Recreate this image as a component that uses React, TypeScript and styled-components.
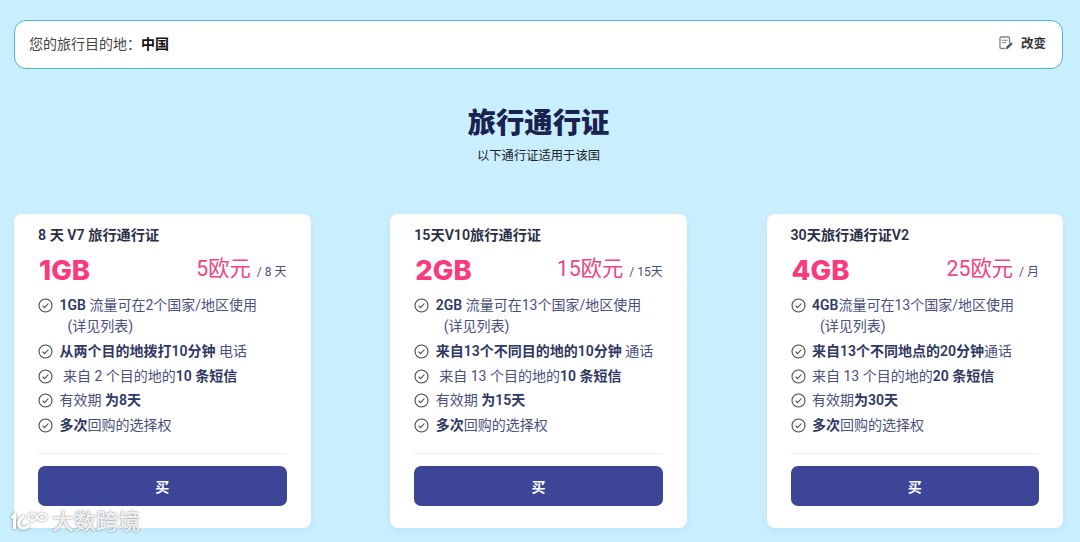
import { ReactNode } from "react";
import styled, { createGlobalStyle } from "styled-components";

interface IPass {
  title: string;
  data: string;
  price: string;
  period: string;
  features: ReactNode[];
}

const Note = styled.span`
  display: block;
  padding-left: 8px;
`;

const passes: IPass[] = [
  {
    title: "8 天 V7 旅行通行证",
    data: "1GB",
    price: "5欧元",
    period: "/ 8 天",
    features: [
      <>
        <b>1GB</b> 流量可在2个国家/地区使用<Note>(详见列表)</Note>
      </>,
      <>
        <b>从两个目的地拨打10分钟</b> 电话
      </>,
      <>
        &nbsp;来自 2 个目的地的<b>10 条短信</b>
      </>,
      <>
        有效期 <b>为8天</b>
      </>,
      <>
        <b>多次</b>回购的选择权
      </>,
    ],
  },
  {
    title: "15天V10旅行通行证",
    data: "2GB",
    price: "15欧元",
    period: "/ 15天",
    features: [
      <>
        <b>2GB</b> 流量可在13个国家/地区使用<Note>(详见列表)</Note>
      </>,
      <>
        <b>来自13个不同目的地的10分钟</b> 通话
      </>,
      <>
        &nbsp;来自 13 个目的地的<b>10 条短信</b>
      </>,
      <>
        有效期 <b>为15天</b>
      </>,
      <>
        <b>多次</b>回购的选择权
      </>,
    ],
  },
  {
    title: "30天旅行通行证V2",
    data: "4GB",
    price: "25欧元",
    period: "/ 月",
    features: [
      <>
        <b>4GB</b>流量可在13个国家/地区使用<Note>(详见列表)</Note>
      </>,
      <>
        <b>来自13个不同地点的20分钟</b>通话
      </>,
      <>
        来自 13 个目的地的<b>20 条短信</b>
      </>,
      <>
        有效期<b>为30天</b>
      </>,
      <>
        <b>多次</b>回购的选择权
      </>,
    ],
  },
];

function CheckIcon() {
  return (
    <svg width="15" height="15" viewBox="0 0 15 15" fill="none">
      <circle cx="7.5" cy="7.5" r="6.5" stroke="#4a4a4a" strokeWidth="1.1" />
      <path d="M4.6 7.7l2 2 3.8-4.2" stroke="#4a4a4a" strokeWidth="1.1" />
    </svg>
  );
}

function EditIcon() {
  return (
    <svg width="14" height="14" viewBox="0 0 14 14" fill="none">
      <path
        d="M6 12.500H2a1 1 0 0 1-1-1V2a1 1 0 0 1 1-1h7.500a1 1 0 0 1 1 1v5"
        stroke="#7d828f"
        strokeWidth="1.3"
      />
      <path d="M3 4.200h5.500M3 6.700h4" stroke="#7d828f" strokeWidth="1.1" />
      <path d="M6.500 13.500l.8-2.800 4.700-4.500 1.700 1.700-4.500 4.700z" fill="#4f5564" />
    </svg>
  );
}

function WatermarkLogo() {
  return (
    <svg width="40" height="24" viewBox="0 0 40 24" fill="none">
      <path
        d="M2.500 8l3-3v14M15 6c-4 2-6 6-5 9 1 4 7 5 10 0"
        stroke="#fff"
        strokeWidth="3"
      />
      <ellipse cx="23.500" cy="7" rx="4" ry="3.500" stroke="#fff" strokeWidth="1.600" />
      <ellipse cx="33" cy="7" rx="4.500" ry="3.500" stroke="#fff" strokeWidth="1.600" />
    </svg>
  );
}

export default function App() {
  return (
    <Page>
      <GlobalStyle />
      <DestinationBar>
        <span>
          您的旅行目的地：<strong>中国</strong>
        </span>
        <ChangeButton>
          <EditIcon />
          改变
        </ChangeButton>
      </DestinationBar>
      <Heading>
        <Title>旅行通行证</Title>
        <Subtitle>以下通行证适用于该国</Subtitle>
      </Heading>
      <Cards>
        {passes.map((pass) => (
          <Card key={pass.title}>
            <CardTitle>{pass.title}</CardTitle>
            <PriceRow>
              <DataAmount>{pass.data}</DataAmount>
              <Price>
                {pass.price}
                <Period>{pass.period}</Period>
              </Price>
            </PriceRow>
            <Features>
              {pass.features.map((feature, index) => (
                <Feature key={index}>
                  <CheckIcon />
                  <div>{feature}</div>
                </Feature>
              ))}
            </Features>
            <Divider />
            <BuyButton>买</BuyButton>
          </Card>
        ))}
      </Cards>
      <Watermark>
        <WatermarkLogo />
        <span>大数跨境</span>
      </Watermark>
    </Page>
  );
}

const GlobalStyle = createGlobalStyle`
  html, body {
    margin: 0;
    height: 100%;
    background: #c9efff;
  }
`;

const Page = styled.div`
  position: relative;
  box-sizing: border-box;
  height: 542px;
  overflow: hidden;
  padding: 19.500px 17px 0 14px;
  background: #c9efff;
  font-family: Roboto, "Noto Sans CJK SC", sans-serif;
`;

const DestinationBar = styled.div`
  box-sizing: border-box;
  display: flex;
  align-items: center;
  justify-content: space-between;
  height: 49px;
  padding: 0 16px 3px 14px;
  background: #fff;
  border: 1px solid #4cb8cc;
  border-radius: 12px;
  font-size: 14px;
  color: #444;

  strong {
    color: #111;
    font-weight: 700;
  }
`;

const ChangeButton = styled.div`
  display: flex;
  align-items: center;
  gap: 8px;
  font-size: 12.500px;
  font-weight: 600;
  color: #333;
`;

const Heading = styled.div`
  display: flex;
  flex-direction: column;
  align-items: center;
  margin-top: 35.500px;
`;

const Title = styled.h1`
  margin: 0;
  font-size: 28.300px;
  line-height: 40px;
  font-weight: 900;
  color: #1a2250;
`;

const Subtitle = styled.p`
  margin: 3px 0 0;
  font-size: 12.300px;
  line-height: 18px;
  color: #222;
`;

const Cards = styled.div`
  display: grid;
  grid-template-columns: repeat(3, 296.500px);
  justify-content: space-between;
  margin-top: 49px;
`;

const Card = styled.div`
  box-sizing: border-box;
  height: 314px;
  padding: 12px 24px 0;
  background: #fff;
  border-radius: 8px;
  box-shadow: 0 2px 6px rgba(60, 90, 120, 0.08);
`;

const CardTitle = styled.div`
  font-size: 14.200px;
  line-height: 18px;
  font-weight: 600;
  color: #2a2f45;
`;

const PriceRow = styled.div`
  display: flex;
  align-items: center;
  justify-content: space-between;
  margin-top: 7px;
  height: 36px;
`;

const DataAmount = styled.div`
  padding: 2px 0 0 1px;
  font-family: Inter, sans-serif;
  font-size: 27.500px;
  font-weight: 800;
  color: #fb3a7d;
`;

const Price = styled.div`
  font-size: 21.300px;
  color: #f0457f;
  margin-top: -5px;
`;

const Period = styled.span`
  margin-left: 6px;
  font-size: 12px;
  color: #48507a;
`;

const Features = styled.ul`
  list-style: none;
  margin: 8px 0 0;
  padding: 0;
  display: flex;
  flex-direction: column;
  gap: 3.750px;
  font-size: 14px;
  line-height: 21px;
  color: #4a5080;

  b {
    font-weight: 600;
    color: #2f3763;
  }
`;

const Feature = styled.li`
  display: flex;
  align-items: flex-start;
  gap: 6.500px;

  svg {
    flex: none;
    margin-top: 3px;
  }
`;

const Divider = styled.hr`
  margin: 17px 0 12px;
  border: 0;
  border-top: 1px solid #f0f0f2;
`;

const BuyButton = styled.button`
  display: block;
  width: 100%;
  height: 40px;
  padding: 0;
  border: 0;
  border-radius: 7px;
  background: #3d4696;
  color: #fff;
  font-family: inherit;
  font-size: 14px;
  font-weight: 600;
`;

const Watermark = styled.div`
  position: absolute;
  left: 9px;
  bottom: 7px;
  display: flex;
  align-items: center;
  gap: 3px;
  font-size: 22px;
  line-height: 26px;
  font-weight: 500;
  color: rgba(255, 255, 255, 0.9);
  text-shadow: 0 0 2px rgba(60, 70, 80, 0.75);

  svg {
    filter: drop-shadow(0 0 1.500px rgba(60, 70, 80, 0.7));
    opacity: 0.9;
  }
`;
